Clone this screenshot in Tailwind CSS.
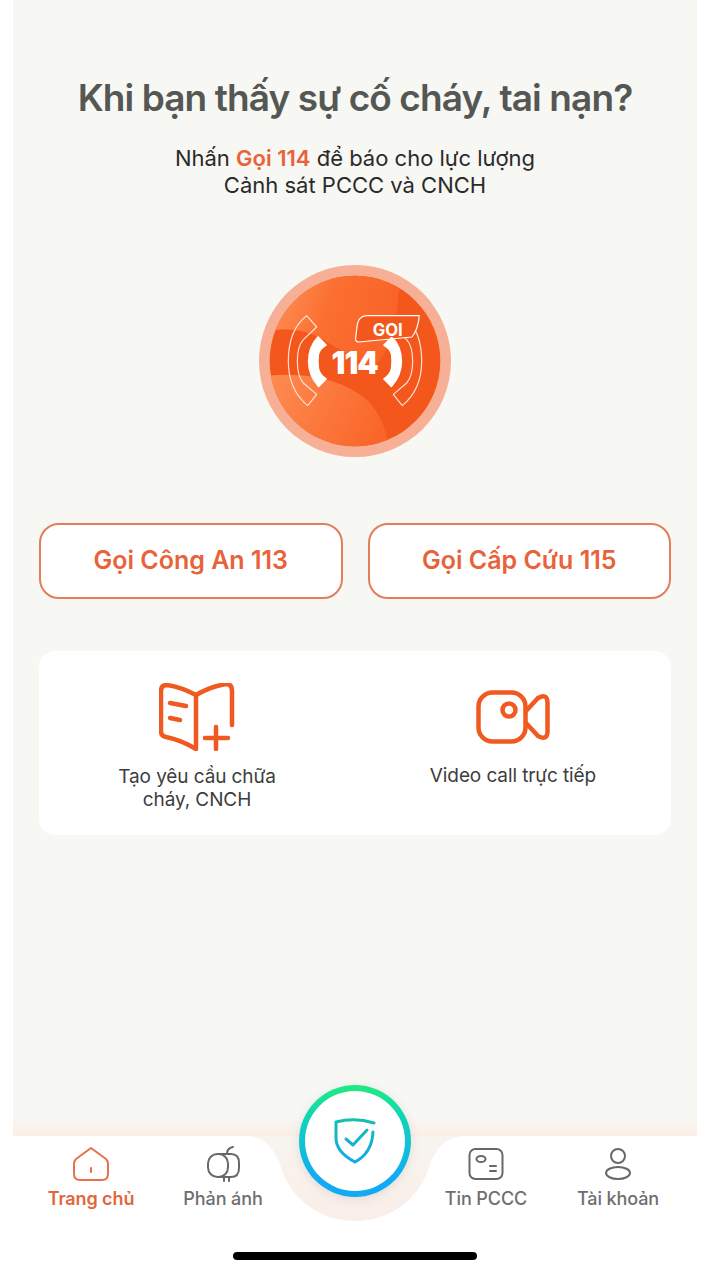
<!DOCTYPE html>
<html lang="vi">
<head>
    <meta charset="UTF-8">
    <meta name="viewport" content="width=device-width, initial-scale=1.0">
    <title>Gọi 114</title>
    <script src="https://cdn.jsdelivr.net/npm/@tailwindcss/browser@4"></script>
</head>
<body class="bg-white font-['Inter',sans-serif]">
    <div class="relative w-[720px] h-[1279px] overflow-hidden bg-white flex flex-col">
        <!-- Noi dung chinh -->
        <main class="ml-[13px] w-[684px] h-[1136px] shrink-0 bg-[#f7f7f3] flex flex-col items-center px-[26px] relative">
            <h1 class="mt-[75px] text-[37px] leading-[46px] font-semibold text-[#555755] tracking-[-0.9px] whitespace-nowrap">Khi bạn thấy sự cố cháy, tai nạn?</h1>
            <p class="mt-[24px] text-[22px] leading-[27px] text-[#2a2a2a] text-center">
                Nhấn <span class="font-semibold text-[#e8623a]">Gọi 114</span> để báo cho lực lượng<br>Cảnh sát PCCC và CNCH
            </p>

            <!-- Logo 114 -->
            <svg class="mt-[66px] shrink-0" width="192" height="192" viewBox="57 46 576 576" fill="none">
                <defs>
                    <clipPath id="inner"><circle cx="345" cy="334" r="256"/></clipPath>
                    <linearGradient id="upper" x1="120" y1="150" x2="420" y2="260" gradientUnits="userSpaceOnUse">
                        <stop offset="0" stop-color="#fd8b52"/>
                        <stop offset="0.45" stop-color="#fb6f30"/>
                        <stop offset="1" stop-color="#f96528"/>
                    </linearGradient>
                    <linearGradient id="lower" x1="100" y1="390" x2="430" y2="560" gradientUnits="userSpaceOnUse">
                        <stop offset="0" stop-color="#fd8a50"/>
                        <stop offset="1" stop-color="#fa6428"/>
                    </linearGradient>
                </defs>
                <circle cx="345" cy="334" r="288" fill="#f7b096"/>
                <g clip-path="url(#inner)">
                    <rect x="80" y="70" width="530" height="530" fill="#f4571c"/>
                    <path d="M80 245 Q170 225 250 270 Q330 320 400 350 Q470 300 480 70 L80 70Z" fill="url(#upper)"/>
                    <path d="M80 378 Q270 360 380 450 Q440 510 445 600 L80 600Z" fill="url(#lower)"/>
                </g>
                <!-- ong nghe vien -->
                <path d="M200 198 L230 232 L190 270 Q172 290 172 335 Q172 380 190 400 L230 434 L203 468 Q145 420 145 335 Q145 240 200 198Z" stroke="#ffe3d6" stroke-width="3.5" stroke-linejoin="round"/>
                <path d="M490 198 L460 232 L500 270 Q518 290 518 335 Q518 380 500 400 L460 434 L487 468 Q545 420 545 335 Q545 240 490 198Z" stroke="#ffe3d6" stroke-width="3.5" stroke-linejoin="round"/>
                <!-- ong nghe trang -->
                <path d="M234 262 L258 286 Q238 298 235 314 Q232 335 235 356 Q238 374 258 388 L236 410 Q206 378 206 335 Q206 292 234 262Z" fill="#fff" stroke="#fff" stroke-width="5" stroke-linejoin="round"/>
                <path d="M456 262 L432 286 Q452 298 455 314 Q458 335 455 356 Q452 374 432 388 L454 410 Q484 378 484 335 Q484 292 456 262Z" fill="#fff" stroke="#fff" stroke-width="5" stroke-linejoin="round"/>
                <text x="344" y="372" text-anchor="middle" font-size="92" font-weight="900" fill="#fff" letter-spacing="-3">114</text>
                <!-- nhan GOI -->
                <path d="M380 198 H538 Q534 240 516 262 L356 277 Q345 277 347 264 L352 224 Q356 200 380 198Z" fill="#f4571c" stroke="#fff" stroke-width="3.5" stroke-linejoin="round"/>
                <text x="443" y="258" text-anchor="middle" font-size="50" font-weight="700" fill="#fff">GỌI</text>
            </svg>

            <!-- Nut goi -->
            <div class="mt-[66px] w-full grid grid-cols-2 gap-[25px]">
                <button class="h-[76px] bg-white border-2 border-[#e37d5c] rounded-[20px] text-[25px] font-semibold text-[#e8623a]">Gọi Công An 113</button>
                <button class="h-[76px] bg-white border-2 border-[#e37d5c] rounded-[20px] text-[25px] font-semibold text-[#e8623a]">Gọi Cấp Cứu 115</button>
            </div>

            <!-- The chuc nang -->
            <div class="mt-[52px] w-full h-[184px] bg-white rounded-[16px] grid grid-cols-2">
                <div class="flex flex-col items-center pt-[32px]">
                    <svg width="76" height="68" viewBox="0 0 76 68" fill="none" stroke="#f0591f" stroke-width="4.5" stroke-linecap="round" stroke-linejoin="round">
                        <path d="M37 12 Q22 4 8 2 Q2 2 2 8 V48 Q2 53 7 54 Q22 57 37 66 V12 Q50 4 67 1 Q73 1 73 8 V42"/>
                        <path d="M11 20 L27 23"/>
                        <path d="M11 35 L21 37"/>
                        <path d="M57 44 V66"/>
                        <path d="M46 55 H69"/>
                    </svg>
                    <p class="mt-[15px] text-[19px] leading-[22.5px] tracking-[-0.1px] text-[#3d3d3d] text-center">Tạo yêu cầu chữa<br>cháy, CNCH</p>
                </div>
                <div class="flex flex-col items-center pt-[39px]">
                    <svg width="74" height="54" viewBox="0 0 74 54" fill="none" stroke="#f0591f" stroke-width="4.5" stroke-linecap="round" stroke-linejoin="round">
                        <rect x="2.5" y="2.5" width="47" height="49" rx="14"/>
                        <circle cx="33" cy="20" r="6.5"/>
                        <path d="M50 21 L62 8 Q71 3 71.5 12 V42 Q71 51 62 46 L50 33"/>
                    </svg>
                    <p class="mt-[21px] text-[19px] leading-[22.5px] tracking-[-0.1px] text-[#3d3d3d] text-center">Video call trực tiếp</p>
                </div>
            </div>

            <!-- Vet chuyen mau tren thanh dieu huong -->
            <div class="absolute left-0 right-0 bottom-0 h-[18px] bg-gradient-to-b from-[#f7f7f3] to-[#fbeee6]"></div>
        </main>

        <!-- Thanh dieu huong -->
        <nav class="relative flex-1 bg-white">
            <svg class="absolute left-0 top-0" width="720" height="100" viewBox="0 0 720 100">
                <defs>
                    <linearGradient id="notch" x1="0" y1="0" x2="0" y2="1">
                        <stop offset="0" stop-color="#f7f4ef"/>
                        <stop offset="1" stop-color="#faeee8"/>
                    </linearGradient>
                </defs>
                <path d="M248 0 Q270 2 280 28 C290 65 322 85 355 85 C388 85 420 65 430 28 Q440 2 462 0Z" fill="url(#notch)"/>
            </svg>
            <div class="relative pl-[25px] grid grid-cols-[132px_132px_131px_132px_132px] pt-[10px]">
                <div class="flex flex-col items-center">
                    <svg width="36" height="36" viewBox="0 0 36 36" fill="none" stroke="#e8704a" stroke-width="2" stroke-linejoin="round" stroke-linecap="round">
                        <path d="M18 2 L33 13 Q35 15 35 18 V28 Q35 34 29 34 H7 Q1 34 1 28 V18 Q1 15 3 13Z"/>
                        <path d="M18 22 V26"/>
                    </svg>
                    <span class="mt-[7px] text-[18px] leading-[20px] tracking-[-0.1px] font-semibold text-[#e2663d]">Trang chủ</span>
                </div>
                <div class="flex flex-col items-center">
                    <svg width="36" height="36" viewBox="0 0 36 36" fill="none" stroke="#686868" stroke-width="2" stroke-linecap="round" stroke-linejoin="round">
                        <rect x="3" y="8" width="20" height="23" rx="9.5"/>
                        <path d="M15 8 H26 Q34 8 34 17 V22 Q34 31 26 31 H15"/>
                        <path d="M22 8 Q22 2 28 1"/>
                        <path d="M19 31 V35"/>
                        <path d="M24 31 V35"/>
                    </svg>
                    <span class="mt-[7px] text-[18px] leading-[20px] tracking-[-0.1px] font-medium text-[#6e6e6e]">Phản ánh</span>
                </div>
                <div></div>
                <div class="flex flex-col items-center">
                    <svg width="36" height="36" viewBox="0 0 36 36" fill="none" stroke="#686868" stroke-width="2" stroke-linecap="round" stroke-linejoin="round">
                        <rect x="1.5" y="3" width="33" height="30" rx="6"/>
                        <ellipse cx="13" cy="13" rx="4.5" ry="3"/>
                        <path d="M22 20 H28"/>
                        <path d="M22 25 H28"/>
                    </svg>
                    <span class="mt-[7px] text-[18px] leading-[20px] tracking-[-0.1px] font-medium text-[#6e6e6e]">Tin PCCC</span>
                </div>
                <div class="flex flex-col items-center">
                    <svg width="36" height="36" viewBox="0 0 36 36" fill="none" stroke="#686868" stroke-width="2">
                        <circle cx="18" cy="10" r="7"/>
                        <ellipse cx="18" cy="27" rx="12" ry="6"/>
                    </svg>
                    <span class="mt-[7px] text-[18px] leading-[20px] tracking-[-0.1px] font-medium text-[#6e6e6e]">Tài khoản</span>
                </div>
            </div>
            <div class="absolute left-[233px] top-[116px] w-[244px] h-[8px] rounded-full bg-black"></div>
        </nav>

        <!-- Nut khien o giua -->
        <div class="absolute left-[299px] top-[1085px] w-[112px] h-[112px] rounded-full bg-gradient-to-b from-[#22ea7e] via-[#12c4d4] via-50% to-[#12aaf5] to-85% p-[6px] shadow-[0_2px_10px_rgba(120,120,120,0.18)]">
            <div class="w-full h-full rounded-full bg-white flex items-center justify-center">
                <svg width="44" height="46" viewBox="0 0 44 46" fill="none" stroke-width="3" stroke-linecap="round" stroke-linejoin="round">
                    <defs>
                        <linearGradient id="shield" x1="22" y1="0" x2="22" y2="46" gradientUnits="userSpaceOnUse">
                            <stop offset="0" stop-color="#14c0a8"/>
                            <stop offset="1" stop-color="#12a8ef"/>
                        </linearGradient>
                    </defs>
                    <path d="M41 5 Q22 -1 3 4 V20 Q3 34 22 44 Q39 35 40 14" stroke="url(#shield)"/>
                    <path d="M13 21 L20 27 L34 12" stroke="url(#shield)"/>
                </svg>
            </div>
        </div>
    </div>
</body>
</html>
